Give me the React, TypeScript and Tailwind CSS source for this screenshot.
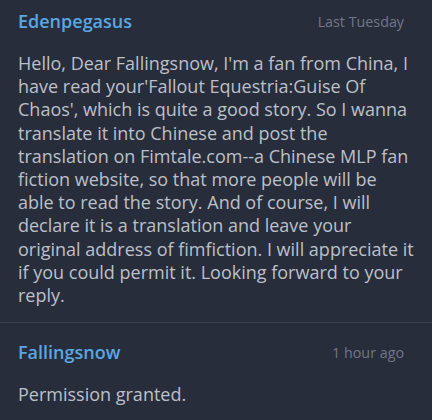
const messages = [
  {
    author: 'Edenpegasus',
    time: 'Last Tuesday',
    lines: [
      "Hello, Dear Fallingsnow, I'm a fan from China, I",
      "have read your'Fallout Equestria:Guise Of",
      "Chaos', which is quite a good story. So I wanna",
      'translate it into Chinese and post the',
      'translation on Fimtale.com--a Chinese MLP fan',
      'fiction website, so that more people will be',
      'able to read the story. And of course, I will',
      'declare it is a translation and leave your',
      'original address of fimfiction. I will appreciate it',
      'if you could permit it. Looking forward to your',
      'reply.',
    ],
  },
  {
    author: 'Fallingsnow',
    time: '1 hour ago',
    lines: ['Permission granted.'],
  },
];

export default function App() {
  return (
    <div className="w-[432px] h-[420px] overflow-hidden bg-[#282d3c] font-['Open_Sans',sans-serif]">
      {messages.map((m, i) => (
        <div key={i} className={i > 0 ? 'border-t border-[#3a4051] pt-[16px]' : 'pt-[8px] pb-[15px]'}>
          <div className="flex items-center justify-between pl-[18px] pr-[28px]">
            <span className="text-[18px] font-semibold text-[#5aa7e2]">{m.author}</span>
            <span className="text-[14.3px] text-[#717788]">{m.time}</span>
          </div>
          <p className="mt-[17px] pl-[18px] text-[18px] leading-[23.2px] text-[#bcc0c9] whitespace-nowrap">
            {m.lines.map((l, j) => (
              <span key={j} className="block">{l}</span>
            ))}
          </p>
        </div>
      ))}
    </div>
  );
}
